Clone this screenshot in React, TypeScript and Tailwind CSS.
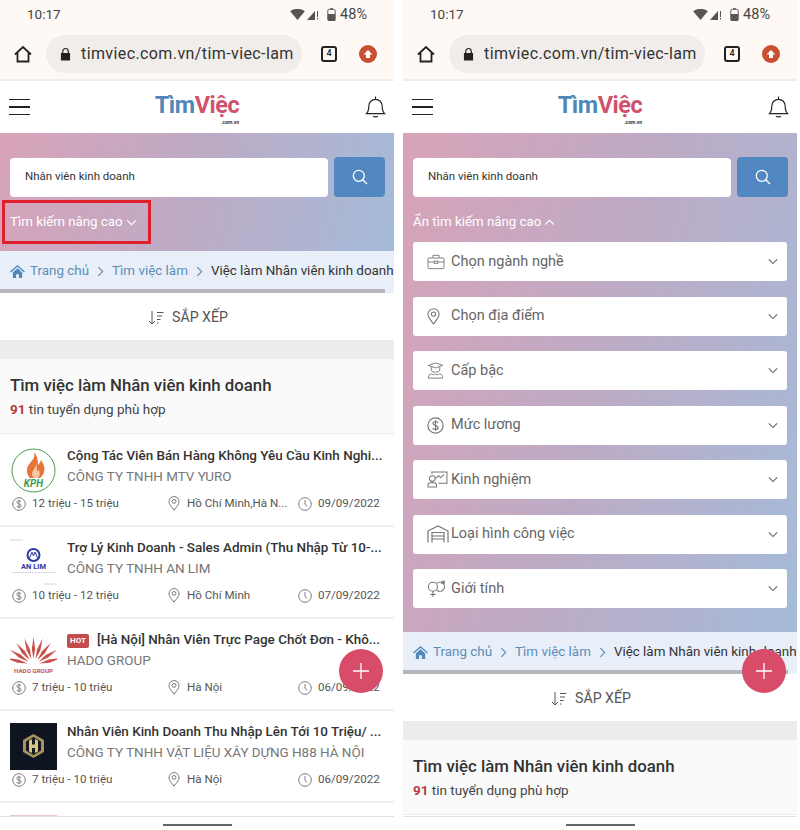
import React from "react";

const S = "#777";

function Chevron({ up = false, className = "" }: { up?: boolean; className?: string }) {
  return (
    <svg viewBox="0 0 12 8" className={className} fill="none" stroke="currentColor" strokeWidth="1.3">
      <path d={up ? "M1 6.5 6 1.5l5 5" : "M1 1.5l5 5 5-5"} />
    </svg>
  );
}

function Dollar({ big = false }: { big?: boolean }) {
  return (
    <svg viewBox="0 0 16 16" className={big ? "w-[17px] h-[17px] shrink-0" : "w-[14px] h-[14px] shrink-0"} fill="none" stroke={S} strokeWidth="1.1">
      <circle cx="8" cy="8" r="7.2" />
      <path d="M10.4 5.6C10 4.6 9 4.2 8 4.2c-1.3 0-2.4.7-2.4 1.9C5.600 8.700 10.500 7.300 10.500 9.900c0 1.200-1.100 1.900-2.500 1.900-1.200 0-2.200-.5-2.600-1.500M8 3v10" />
    </svg>
  );
}
function Pin({ big = false }: { big?: boolean }) {
  return (
    <svg viewBox="0 0 14 18" className={big ? "w-[13px] h-[17px] shrink-0" : "w-[12px] h-[15px] shrink-0"} fill="none" stroke={S} strokeWidth="1.2">
      <path d="M7 17C4 13 1 10 1 6.700A6 6 0 0 1 13 6.700C13 10 10 13 7 17Z" />
      <circle cx="7" cy="6.500" r="2.300" />
    </svg>
  );
}
function Clock() {
  return (
    <svg viewBox="0 0 16 16" className="w-[14px] h-[14px] shrink-0" fill="none" stroke={S} strokeWidth="1.1">
      <circle cx="8" cy="8" r="7.2" />
      <path d="M8 3.500V8.500L10.500 10.500" />
    </svg>
  );
}

function Briefcase() {
  return (
    <svg viewBox="0 0 20 18" className="w-[18px] h-[16px]" fill="none" stroke={S} strokeWidth="1">
      <rect x="1" y="4.500" width="18" height="12" rx="1" />
      <path d="M6.500 4.500V1.500h7v3M1 9h7M12 9h7" />
      <rect x="8" y="8" width="4" height="2.500" />
    </svg>
  );
}
function Grad() {
  return (
    <svg viewBox="0 0 20 20" className="w-[17px] h-[17px]" fill="none" stroke={S} strokeWidth="1.1">
      <path d="M1.500 4 10 1l8.500 3L10 7ZM5 6v3.500c0 1.500 2.500 2.500 5 2.500s5-1 5-2.500V6" />
      <path d="M1.500 19c0-3 1-4.500 4-5 1 1.200 3 1.200 4.500.500 1.500.7 3.500.7 4.500-.5 3 .5 4 2 4 5Z" />
    </svg>
  );
}
function Exp() {
  return (
    <svg viewBox="0 0 22 18" className="w-[21px] h-[17px] max-w-none" fill="none" stroke={S} strokeWidth="1.1">
      <circle cx="5.500" cy="8" r="3" />
      <path d="M1 17v-2c0-1.500 1-2.500 2.500-2.500h4c1.500 0 2.500 1 2.500 2.500v2Z" />
      <path d="M5 3V1h16v12h-9M9 8l3-3 2.500 2L18 3.500" />
    </svg>
  );
}
function Garage() {
  return (
    <svg viewBox="0 0 22 18" className="w-[22px] h-[18px] max-w-none" fill="none" stroke={S} strokeWidth="1.2">
      <path d="M1 17.500V6l10-5 10 5v11.500" />
      <path d="M5 17.500V7.500h12v10M5 11h12M5 14h12" />
    </svg>
  );
}
function Gender() {
  return (
    <svg viewBox="0 0 22 18" className="w-[20px] h-[18px] max-w-none" fill="none" stroke={S} strokeWidth="1.2">
      <circle cx="6.500" cy="6.500" r="5" />
      <path d="M6.500 11.500v6M3.500 15h6" />
      <path d="M11 2.700a5 5 0 1 1 0 7.700M15.500 3l3.500-2.500M16 .5h3v3" />
    </svg>
  );
}

function KphLogo() {
  return (
    <svg viewBox="0 0 47 47" className="w-[47px] h-[47px]">
      <circle cx="23.500" cy="23.500" r="21.500" fill="#fff" stroke="#4c9a55" strokeWidth="1" />
      <path d="M24 5c2 6-3 9-6 14-2 4-1 9 2 12h10c4-3 5-8 4-12-1-3-2-4-3-6-1 3-2 4-3 5 0-5-1-10-4-13Z" fill="#e8743a" />
      <path d="M26 17c0 4-4 6-4 10 0 2 1 3 2 4h4c2-2 2-5 1-8-1 1-1 1-2 1 0-3 0-5-1-7Z" fill="#f7c8a0" />
      <text x="23.500" y="39.500" textAnchor="middle" fontSize="10" fontWeight="700" fontStyle="italic" fill="#3f9a4b" fontFamily="Roboto">KPH</text>
    </svg>
  );
}
function AnLimLogo() {
  return (
    <svg viewBox="0 0 47 47" className="w-[47px] h-[47px]">
      <path d="M0 1h13M34 45h13" stroke="#c9cce6" strokeWidth="0.800" />
      <circle cx="23.500" cy="16" r="6" fill="#fff" stroke="#2d3aa0" strokeWidth="2" />
      <path d="M19.500 19l2.500-6 1.500 4 1.500-4 2.500 6" fill="none" stroke="#2d3aa0" strokeWidth="1" />
      <text x="23.500" y="30" textAnchor="middle" fontSize="7.500" fontWeight="700" fill="#2d3aa0" fontFamily="Roboto">AN LIM</text>
      <path d="M2 33.500h43" stroke="#c9cce6" strokeWidth="1" strokeDasharray="1.500 .7" />
    </svg>
  );
}
function spear(deg: number) {
  const a = (deg * Math.PI) / 180;
  const cx = 23.5, cy = 34;
  const pt = (r: number, off: number) => {
    const x = cx + r * Math.sin(a) + off * Math.cos(a);
    const y = cy - r * Math.cos(a) + off * Math.sin(a);
    return `${x.toFixed(2)},${y.toFixed(2)}`;
  };
  return [pt(6, 0), pt(16, 1.7), pt(28, 0), pt(16, -1.7)].join(" ");
}
function HadoLogo() {
  return (
    <svg viewBox="0 0 47 47" className="w-[47px] h-[47px]" fill="#c9504c">
      {[-76, -57, -38, -19, 0, 19, 38, 57, 76].map((d) => (
        <polygon key={d} points={spear(d)} />
      ))}
      <text x="23.500" y="42" textAnchor="middle" fontSize="6.200" fontWeight="700" fontFamily="Roboto">HADO GROUP</text>
    </svg>
  );
}
function H88Logo() {
  return (
    <svg viewBox="0 0 47 47" className="w-[47px] h-[47px]">
      <rect width="47" height="47" fill="#0f1520" />
      <path d="M23.500 11 34 17v12l-10.500 6L13 29V17Z" fill="#a8925f" />
      <path d="M23.500 14 31 18.500v9L23.500 32 16 27.500v-9Z" fill="#16181c" />
      <path d="M19 17.500l3 -1.500v5.500h3v-5.500l3 1.500v11l-3 1.500v-5h-3v5l-3-1.500Z" fill="#d9c48c" />
    </svg>
  );
}

type Job = { title: string; hot?: boolean; company: string; salary: string; place: string; date: string; logo: React.ReactNode };
const jobs: Job[] = [
  { title: "Cộng Tác Viên Bán Hàng Không Yêu Cầu Kinh Nghi...", company: "CÔNG TY TNHH MTV YURO", salary: "12 triệu - 15 triệu", place: "Hồ Chí Minh,Hà N...", date: "09/09/2022", logo: <KphLogo /> },
  { title: "Trợ Lý Kinh Doanh - Sales Admin (Thu Nhập Từ 10-...", company: "CÔNG TY TNHH AN LIM", salary: "10 triệu - 12 triệu", place: "Hồ Chí Minh", date: "07/09/2022", logo: <AnLimLogo /> },
  { title: "[Hà Nội] Nhân Viên Trực Page Chốt Đơn - Khô...", hot: true, company: "HADO GROUP", salary: "7 triệu - 10 triệu", place: "Hà Nội", date: "06/09/2022", logo: <HadoLogo /> },
  { title: "Nhân Viên Kinh Doanh Thu Nhập Lên Tới 10 Triệu/ ...", company: "CÔNG TY TNHH VẬT LIỆU XÂY DỰNG H88 HÀ NỘI", salary: "7 triệu - 10 triệu", place: "Hà Nội", date: "06/09/2022", logo: <H88Logo /> },
];

function JobRow({ job }: { job: Job }) {
  return (
    <div className="h-[92px] border-b-2 border-[#efefef] pl-[10px] pr-[10px] pt-[10px]">
      <div className="flex h-[49px]">
        <div className="w-[47px] shrink-0 mt-[2px]">{job.logo}</div>
        <div className="ml-[10px] min-w-0 flex-1 pt-[1px]">
          <div className="flex items-center h-[21px] text-[13.45px] font-medium text-[#333] whitespace-nowrap">
            {job.hot && <span className="mr-[8px] w-[22px] h-[14px] shrink-0 rounded-[2px] bg-[#c24d4d] text-white text-[8px] font-bold flex items-center justify-center">HOT</span>}
            {job.title}
          </div>
          <div className="h-[20px] leading-[20px] text-[13.45px] text-[#777] whitespace-nowrap">{job.company}</div>
        </div>
      </div>
      <div className="grid grid-cols-[155px_131px_1fr] pl-[2px] mt-[1px] text-[11.6px] text-[#555] h-[18px] items-center">
        <div className="flex items-center gap-[6px]"><Dollar />{job.salary}</div>
        <div className="flex items-center gap-[7px]"><span className="ml-[1px]"><Pin /></span>{job.place}</div>
        <div className="flex items-center gap-[6px]"><Clock />{job.date}</div>
      </div>
    </div>
  );
}

function Phone({ expanded }: { expanded: boolean }) {
  const filters: [React.ReactNode, string][] = [
    [<Briefcase />, "Chọn ngành nghề"],
    [<Pin big />, "Chọn địa điểm"],
    [<Grad />, "Cấp bậc"],
    [<Dollar big />, "Mức lương"],
    [<Exp />, "Kinh nghiệm"],
    [<Garage />, "Loại hình công việc"],
    [<Gender />, "Giới tính"],
  ];
  return (
    <div className="relative w-[394px] h-[830px] overflow-hidden bg-white shrink-0">
      {/* Status */}
      <div className="bg-[#fff9f6] h-[28px] flex items-center pl-[27px] pr-[27px] text-[13.5px] text-[#444]">
        <span>10:17</span>
        <div className="ml-auto flex items-center gap-[2px]">
          <svg viewBox="0 0 16 12" className="w-[15px] h-[11px]" fill="#555"><path d="M0 2.500C4-1 12-1 16 2.500L8 12Z" /></svg>
          <svg viewBox="0 0 12 12" className="w-[12px] h-[12px]" fill="#555"><path d="M0 12 8 3v9Z" /><path d="M10 3h1v6h-1ZM10 10h1v1.500h-1Z" /></svg>
          <svg viewBox="0 0 9 14" className="w-[9px] h-[13px] ml-[6px]" fill="none" stroke="#555"><rect x=".5" y="1.500" width="8" height="12" rx="1.500" /><rect x="1" y="7" width="7" height="6.500" fill="#555" /><path d="M3 .5h3" /></svg>
          <span className="ml-[2px] text-[14.5px] leading-[20px] pt-[1px]">48%</span>
        </div>
      </div>
      {/* Toolbar */}
      <div className="bg-[#fff9f6] h-[53px] border-b-2 border-[#f2ece8] flex items-center pl-[14px]">
        <svg viewBox="0 0 18 18" className="w-[18px] h-[18px]" fill="none" stroke="#222" strokeWidth="1.800"><path d="M1 9.500 9 2l8 7.500M3.500 8v8.500h11V8" /></svg>
        <div className="ml-[14px] w-[256px] h-[38px] rounded-full bg-[#f1edea] flex items-center pl-[14px] pt-[1px] overflow-hidden">
          <svg viewBox="0 0 12 14" className="w-[11px] h-[14px] shrink-0" fill="#222"><path d="M1 6h10v8H1Z" /><path d="M3 6V4a3 3 0 0 1 6 0v2" fill="none" stroke="#222" strokeWidth="1.300" /></svg>
          <span className="ml-[10px] text-[16px] tracking-[0.4px] text-[#333] whitespace-nowrap">timviec.com.vn/tim-viec-lam</span>
        </div>
        <div className="ml-[19px] w-[16px] h-[16px] border-2 border-[#222] rounded-[3px] text-[9px] font-medium flex items-center justify-center text-[#222]">4</div>
        <div className="ml-[22px] w-[18px] h-[18px] rounded-full bg-[#c94f33] flex items-center justify-center">
          <svg viewBox="0 0 10 10" className="w-[10px] h-[10px]" fill="#fff"><path d="M5 1 9.500 5.500H7V9H3V5.500H.5Z" /></svg>
        </div>
      </div>
      {/* Header */}
      <div className="h-[52px] flex items-center justify-between pl-[9px] pr-[8px]">
        <div className="flex flex-col gap-[6px] w-[21px]">
          <div className="h-[1.5px] bg-[#222]" /><div className="h-[1.5px] bg-[#222]" /><div className="h-[1.5px] bg-[#222]" />
        </div>
        <div className="relative text-[23.5px] font-bold leading-[28px] tracking-[-0.5px] mt-[-4px] mr-[1px]">
          <span className="text-[#4f87b9]">Tìm</span><span className="text-[#d0526c]">Việc</span>
          <span className="absolute right-0 top-[28px] text-[5px] leading-[7px] font-bold text-[#333] tracking-normal">.com.vn</span>
        </div>
        <svg viewBox="0 0 22 24" className="w-[21px] h-[24px]" fill="none" stroke="#222" strokeWidth="1.200"><path d="M1.500 19c2-2 2.500-3 2.500-8 0-4 3-7 7-7s7 3 7 7c0 5 .5 6 2.500 8ZM8.500 21.500c1 1.200 4 1.200 5 0M11 1v3" /></svg>
      </div>
      {/* Hero */}
      <div className="bg-[linear-gradient(105deg,#d8a3b8_0%,#bdabc5_50%,#a4bbd9_100%)] pt-[24px] pl-[10px] pr-[9px]" style={{ height: expanded ? 499 : 118 }}>
        <div className="flex gap-[6px] h-[40px]">
          <div className="flex-1 mt-[1px] h-[39px] bg-white rounded-[4px] flex items-center pl-[15px] pb-[1px] text-[11.5px] text-[#333]">Nhân viên kinh doanh</div>
          <div className="w-[51px] h-[40px] rounded-[4px] bg-[#5288c1] flex items-center justify-center">
            <svg viewBox="0 0 16 16" className="w-[16px] h-[16px]" fill="none" stroke="#fff" strokeWidth="1.300"><circle cx="6.800" cy="6.800" r="5.500" /><path d="M10.800 10.800 15 15" /></svg>
          </div>
        </div>
        <div className="flex items-center h-[20px] mt-[15px] text-[13.3px] text-white gap-[3px]">
          {expanded ? "Ẩn tìm kiếm nâng cao" : "Tìm kiếm nâng cao"}
          <Chevron up={expanded} className="w-[11px] h-[7px]" />
        </div>
        {expanded && (
          <div className="mt-[10px] mr-[1px] flex flex-col gap-[15.500px]">
            {filters.map(([icon, label]) => (
              <div key={label} className="h-[39px] bg-white rounded-[3px] flex items-center pr-[9px] text-[14.500px] text-[#666]">
                <div className="w-[38px] pl-[14px] flex items-center justify-start shrink-0">{icon}</div>
                <span>{label}</span>
                <Chevron className="ml-auto w-[10px] h-[7px] text-[#666]" />
              </div>
            ))}
          </div>
        )}
      </div>
      {/* Breadcrumb */}
      <div className="h-[42px] bg-[#e9eff9] relative overflow-hidden">
        <div className="flex items-center h-[41px] pl-[10px] text-[13.4px] whitespace-nowrap">
          <svg viewBox="0 0 16 14" className="w-[15px] h-[13px] shrink-0" fill="#4f87b9"><path d="M8 0 16 7l-1 1-7-6-7 6-1-1Z" /><path d="M3 8l5-4.500L13 8v6H9.500v-4h-3v4H3Z" /></svg>
          <span className="ml-[5px] text-[#5b8db5]">Trang chủ</span>
          <Chevron className="w-[7px] h-[9px] -rotate-90 mx-[8px] text-[#5b8db5] shrink-0 scale-150" />
          <span className="text-[#5b8db5]">Tìm việc làm</span>
          <Chevron className="w-[7px] h-[9px] -rotate-90 mx-[8px] text-[#5b8db5] shrink-0 scale-150" />
          <span className="text-[#333]">Việc làm Nhân viên kinh doanh</span>
        </div>
        <div className="absolute left-0 bottom-0 h-[4px] w-[385px] bg-[#b4b6bb]" />
      </div>
      {/* Sort */}
      <div className="h-[47px] flex items-center justify-center gap-[8px] pt-[2px] pr-[18px] text-[14.2px] text-[#555]">
        <svg viewBox="0 0 16 14" className="w-[16px] h-[14px]" fill="none" stroke="#555" strokeWidth="1"><path d="M4 0v13M1 10l3 3 3-3M9 1.500h6.500M9 5h5M9 8.500h3.500M9 12h1.500" /></svg>
        SẮP XẾP
      </div>
      {/* Gap */}
      <div className="h-[19px] bg-[#ececec]" />
      {/* Title */}
      <div className="h-[75px] mb-[1px] bg-[#fafafa] border-b border-[#ececec] pl-[10px] pt-[14px]">
        <div className="text-[16.8px] leading-[24px] font-medium text-[#333]">Tìm việc làm Nhân viên kinh doanh</div>
        <div className="text-[13.5px] leading-[20px] mt-[2px] text-[#444]"><span className="font-bold text-[#b83a3a]">91</span> tin tuyển dụng phù hợp</div>
      </div>
      {!expanded && jobs.map((j) => <JobRow key={j.title} job={j} />)}
      {!expanded && <div className="ml-[10px] mt-[12px] w-[47px] h-[3px] bg-[#e9c9cf]" />}
      {/* Bottom gesture bar */}
      <div className="absolute left-0 right-0 bottom-0 h-[14px] bg-white border-t border-[#e2e2e2]">
        <div className="mx-auto mt-[7px] w-[69px] h-[2px] bg-[#666]" />
      </div>
      {/* FAB */}
      <div className="absolute left-[339px] top-[649px] w-[44px] h-[44px] rounded-full bg-[#d94c69] flex items-center justify-center">
        <svg viewBox="0 0 16 16" className="w-[16px] h-[16px]" stroke="#fff" strokeWidth="1.300"><path d="M8 0v16M0 8h16" /></svg>
      </div>
      {/* Annotation */}
      {!expanded && <div className="absolute left-[2px] top-[200px] w-[149px] h-[44px] border-[3px] border-[#e01f2d]" />}
    </div>
  );
}

export default function App() {
  return (
    <div className="w-[800px] h-[830px] bg-white flex gap-[9px] overflow-hidden" style={{ fontFamily: "Roboto, sans-serif" }}>
      <Phone expanded={false} />
      <Phone expanded={true} />
    </div>
  );
}
